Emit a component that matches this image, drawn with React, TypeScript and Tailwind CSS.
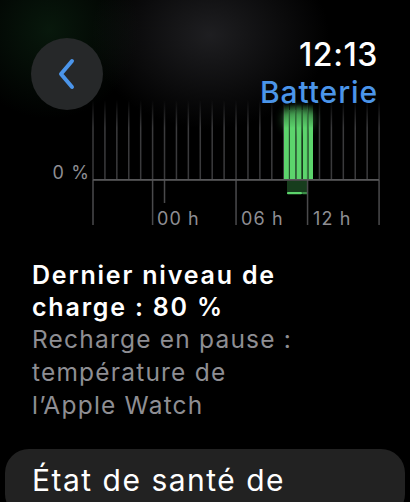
const GRID = Array.from({ length: 25 }, (_, i) => 93 + i * 11.92);
const LONG_TICKS: Record<number, number> = { 0: 129, 5: 129, 6: 107, 12: 129, 18: 129, 24: 129 };

/** Battery level chart: hourly grid, charge bars, time axis. */
function BatteryChart() {
  // svg y = page y - 96
  return (
    <svg width={410} height={136} className="-mt-[14px] block" aria-hidden>
      <defs>
        <linearGradient id="gridFade" x1="0" y1="0" x2="0" y2="1">
          <stop offset="0" stopColor="#3a3a3c" stopOpacity="0" />
          <stop offset="0.35" stopColor="#3a3a3c" stopOpacity="1" />
          <stop offset="1" stopColor="#3a3a3c" stopOpacity="1" />
        </linearGradient>
        <linearGradient id="barFade" x1="0" y1="0" x2="0" y2="1">
          <stop offset="0" stopColor="#5cd46c" stopOpacity="0" />
          <stop offset="0.45" stopColor="#5cd46c" stopOpacity="0.55" />
          <stop offset="1" stopColor="#5cd46c" stopOpacity="1" />
        </linearGradient>
        <filter id="soft" x="-50%" y="-50%" width="200%" height="200%">
          <feGaussianBlur stdDeviation="5" />
        </filter>
      </defs>

      {GRID.map((x, i) => (
        <rect key={i} x={x - 0.75} y={4} width={1.5} height={80} fill="url(#gridFade)" />
      ))}

      <ellipse cx={298} cy={24} rx={15} ry={12} fill="#4fb95e" opacity={0.55} filter="url(#soft)" />
      {[284, 290, 296.5, 303, 308.5].map((x, i) => (
        <g key={i}>
          <rect x={x} y={8} width={i === 4 ? 4.5 : 5} height={24} fill="url(#barFade)" />
          <rect x={x} y={32} width={i === 4 ? 4.5 : 5} height={52} fill="#5cd46c" />
        </g>
      ))}
      {[289.3, 295.6, 302, 307.5].map((x, i) => (
        <rect key={i} x={x - 0.6} y={14} width={1.2} height={70} fill="#2f6b38" opacity={0.85} />
      ))}

      <rect x={287} y={85} width={21} height={13} fill="#173d1d" />
      <rect x={287} y={96} width={15} height={2.2} rx={1} fill="#5cd46c" />
      <rect x={302} y={96} width={6} height={2.2} rx={1} fill="#3c8f48" />

      {Object.entries(LONG_TICKS).map(([i, y2]) => (
        <rect key={i} x={GRID[+i] - 0.75} y={84} width={1.5} height={y2 - 84} fill="#4a4a4c" />
      ))}
      <rect x={93} y={83} width={286} height={1.8} fill="#565658" />

      <g fill="#8e8e93" fontFamily="Inter, sans-serif" fontSize={18} letterSpacing={1.1}>
        <text x={90} y={83} textAnchor="end">0 %</text>
        <text x={157} y={129}>00 h</text>
        <text x={241} y={129}>06 h</text>
        <text x={313} y={129}>12 h</text>
      </g>
    </svg>
  );
}

export default function App() {
  return (
    <div
      className="relative h-[502px] w-[410px] overflow-hidden bg-black text-white"
      style={{ fontFamily: "Inter, 'Liberation Sans', sans-serif" }}
    >
      <div
        aria-hidden
        className="pointer-events-none absolute -left-[40px] -top-[60px] h-[180px] w-[180px] rounded-full bg-[radial-gradient(circle,rgba(20,60,30,0.4),rgba(0,0,0,0)_70%)]"
      />
      <div
        aria-hidden
        className="pointer-events-none absolute left-[90px] -top-[60px] h-[190px] w-[240px] rounded-full bg-[radial-gradient(ellipse,rgba(55,55,60,0.55),rgba(0,0,0,0)_70%)]"
      />

      <div className="relative flex items-start justify-between pl-[31px] pr-[32px] pt-[38px]">
        <button className="flex h-[72px] w-[72px] items-center justify-center rounded-full bg-[#262829]">
          <svg width="22" height="32" viewBox="0 0 22 32" aria-hidden>
            <path
              d="M16 3 L5 16 L16 29"
              fill="none"
              stroke="#4b95ea"
              strokeWidth="4"
              strokeLinecap="round"
              strokeLinejoin="round"
            />
          </svg>
        </button>
        <div className="-mt-[2px] flex flex-col items-end">
          <span className="text-[32px] font-medium leading-[38px] tracking-[0.6px]">12:13</span>
          <span className="text-[30px] font-medium leading-[36px] tracking-[0.9px] text-[#4b95ea]">
            Batterie
          </span>
        </div>
      </div>

      <div className="relative">
        <BatteryChart />
      </div>

      <div className="relative mt-[27px] px-[32px]">
        <p className="text-[25px] font-semibold leading-[32px] tracking-[1.8px]">
          Dernier niveau de
          <br />
          charge : 80 %
        </p>
        <p className="text-[24.5px] leading-[33px] tracking-[1.2px] text-[#8e8e93]">
          Recharge en pause :
          <br />
          température de
          <br />
          l’Apple Watch
        </p>
      </div>

      <div className="relative mx-[5px] mt-[27px] rounded-[24px] bg-[#222222] px-[27px] pt-[13px] pb-[20px]">
        <p className="text-[30px] leading-[36px] tracking-[1.5px]">État de santé de</p>
      </div>
    </div>
  );
}
